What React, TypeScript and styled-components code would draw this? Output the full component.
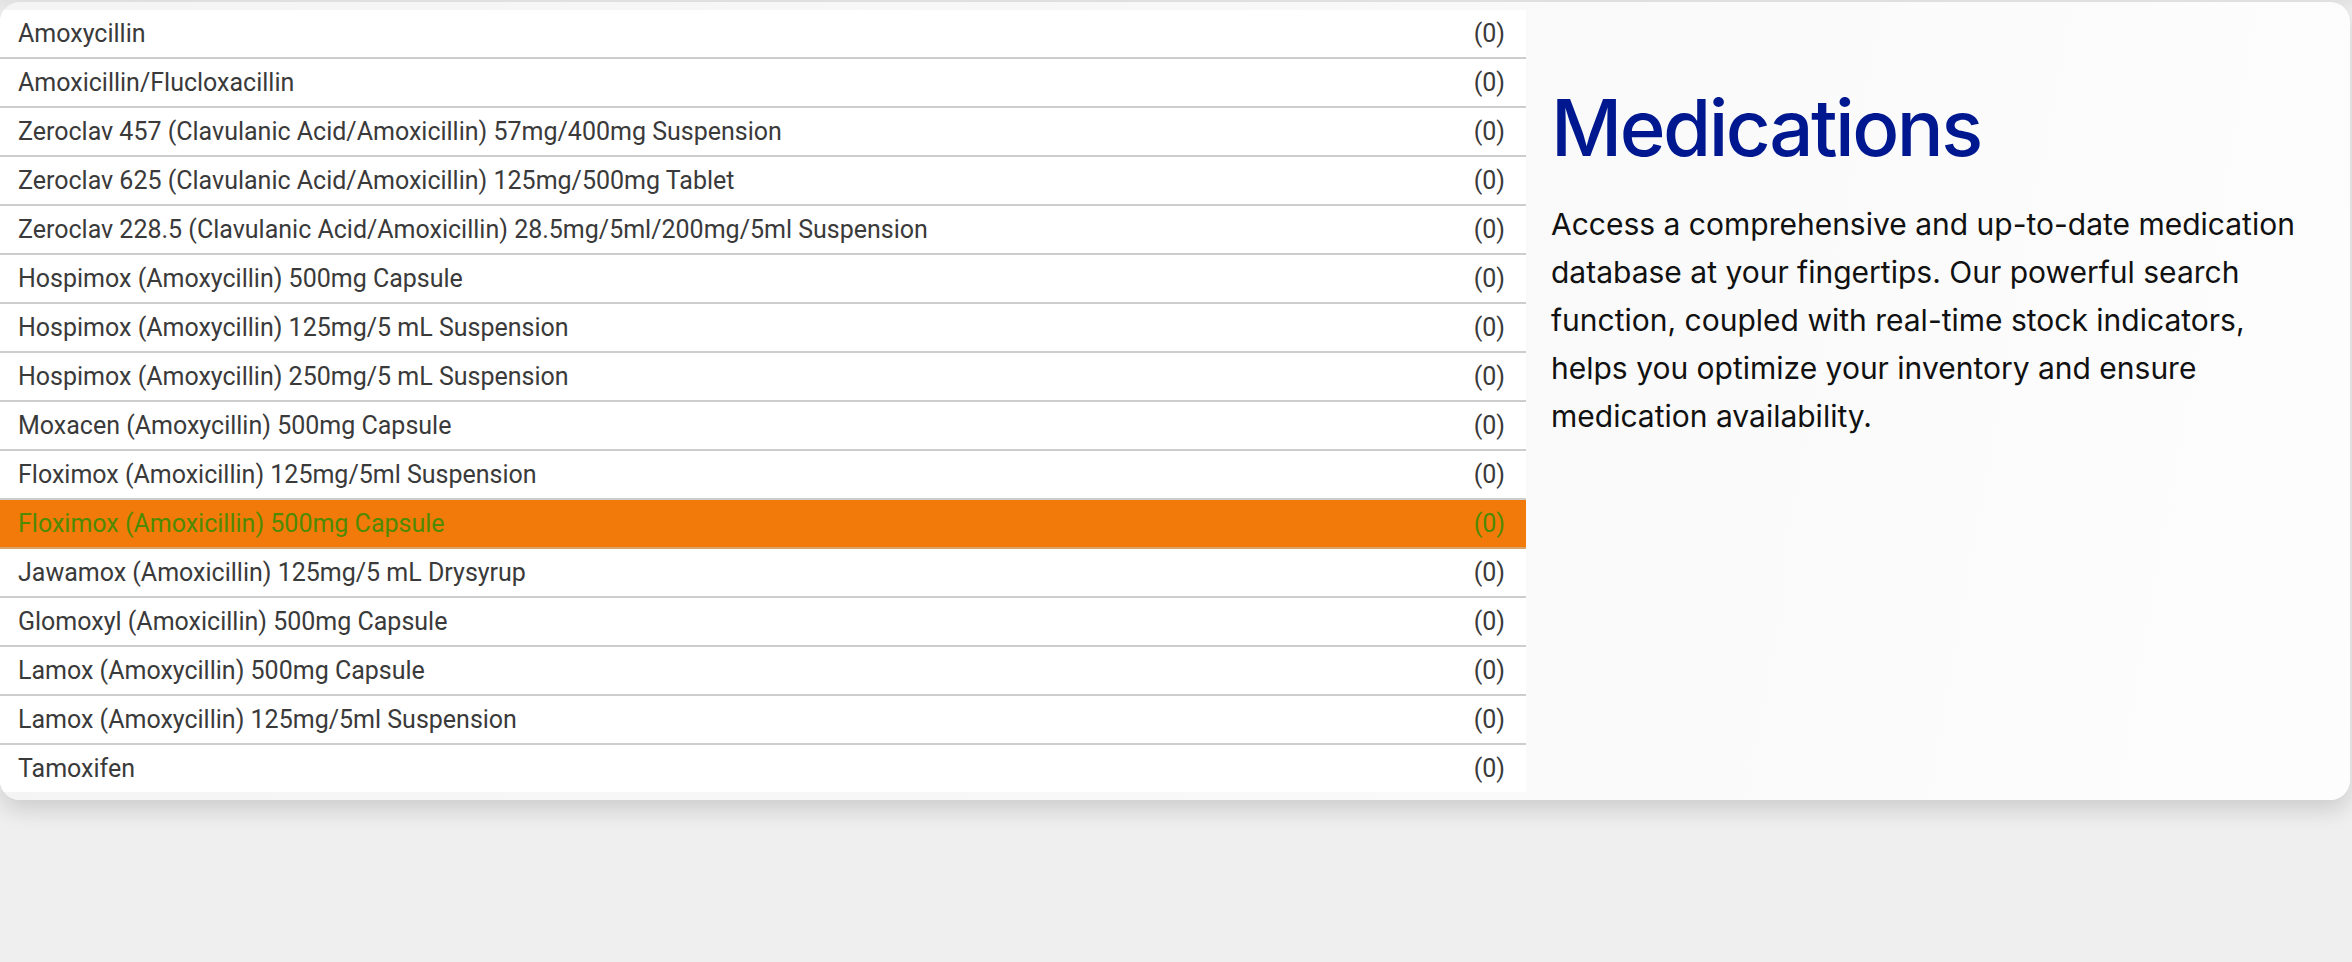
import React from "react";
import styled, { createGlobalStyle } from "styled-components";

const Global = createGlobalStyle`
  html, body { margin: 0; padding: 0; background: #efefef; }
  body { font-family: Roboto, "Liberation Sans", sans-serif; }
`;

const Page = styled.div`
  width: 2352px;
  height: 962px;
  background: linear-gradient(#e4e4e4 0px, #efefef 12px, #efefef 100%);
  padding-top: 2px;
  box-sizing: border-box;
`;

const Card = styled.section`
  width: 2350px;
  height: 798px;
  border-radius: 20px;
  background: linear-gradient(100deg, #f4f4f4 0%, #f8f8f8 50%, #fdfdfd 100%);
  box-shadow: 0 10px 22px rgba(0, 0, 0, 0.14);
  display: flex;
  overflow: hidden;
`;

const List = styled.ul`
  list-style: none;
  margin: 8px 0 0 0;
  padding: 0;
  width: 1526px;
  flex: none;
  background: #fff;
  align-self: flex-start;
`;

const Row = styled.li<{ $active?: boolean }>`
  display: flex;
  justify-content: space-between;
  align-items: center;
  height: 47px;
  padding: 0 21px 0 18px;
  border-bottom: 2px solid ${(p) => (p.$active ? "#d9a36a" : "#cdcdcd")};
  background: ${(p) => (p.$active ? "#f27a0b" : "#ffffff")};
  color: ${(p) => (p.$active ? "#4f8a00" : "#3a3a3a")};
  font-family: Roboto, "Liberation Sans", sans-serif;
  font-size: 25px;
  &:last-child { border-bottom: none; }
`;

const Count = styled.span`
  font-size: 25px;
`;

const Info = styled.div`
  padding: 78px 40px 0 25px;
`;

const Title = styled.h1`
  margin: 0;
  font-family: Inter, "Noto Sans", sans-serif;
  font-weight: 500;
  font-size: 78px;
  line-height: 96px;
  letter-spacing: -2.5px;
  color: #00188f;
`;

const Text = styled.p`
  margin: 24px 0 0 0;
  font-family: Inter, "Noto Sans", sans-serif;
  font-size: 30px;
  line-height: 48px;
  letter-spacing: 0;
  color: #111111;
  max-width: 770px;
`;

const meds = [
  "Amoxycillin",
  "Amoxicillin/Flucloxacillin",
  "Zeroclav 457 (Clavulanic Acid/Amoxicillin) 57mg/400mg Suspension",
  "Zeroclav 625 (Clavulanic Acid/Amoxicillin) 125mg/500mg Tablet",
  "Zeroclav 228.5 (Clavulanic Acid/Amoxicillin) 28.5mg/5ml/200mg/5ml Suspension",
  "Hospimox (Amoxycillin) 500mg Capsule",
  "Hospimox (Amoxycillin) 125mg/5 mL Suspension",
  "Hospimox (Amoxycillin) 250mg/5 mL Suspension",
  "Moxacen (Amoxycillin) 500mg Capsule",
  "Floximox (Amoxicillin) 125mg/5ml Suspension",
  "Floximox (Amoxicillin) 500mg Capsule",
  "Jawamox (Amoxicillin) 125mg/5 mL Drysyrup",
  "Glomoxyl (Amoxicillin) 500mg Capsule",
  "Lamox (Amoxycillin) 500mg Capsule",
  "Lamox (Amoxycillin) 125mg/5ml Suspension",
  "Tamoxifen",
];

export default function App() {
  return (
    <Page>
      <Global />
      <Card>
        <List>
          {meds.map((m, i) => (
            <Row key={m} $active={i === 10}>
              <span>{m}</span>
              <Count>(0)</Count>
            </Row>
          ))}
        </List>
        <Info>
          <Title>Medications</Title>
          <Text>
            Access a comprehensive and up-to-date medication database at your
            fingertips. Our powerful search function, coupled with real-time
            stock indicators, helps you optimize your inventory and ensure
            medication availability.
          </Text>
        </Info>
      </Card>
    </Page>
  );
}
